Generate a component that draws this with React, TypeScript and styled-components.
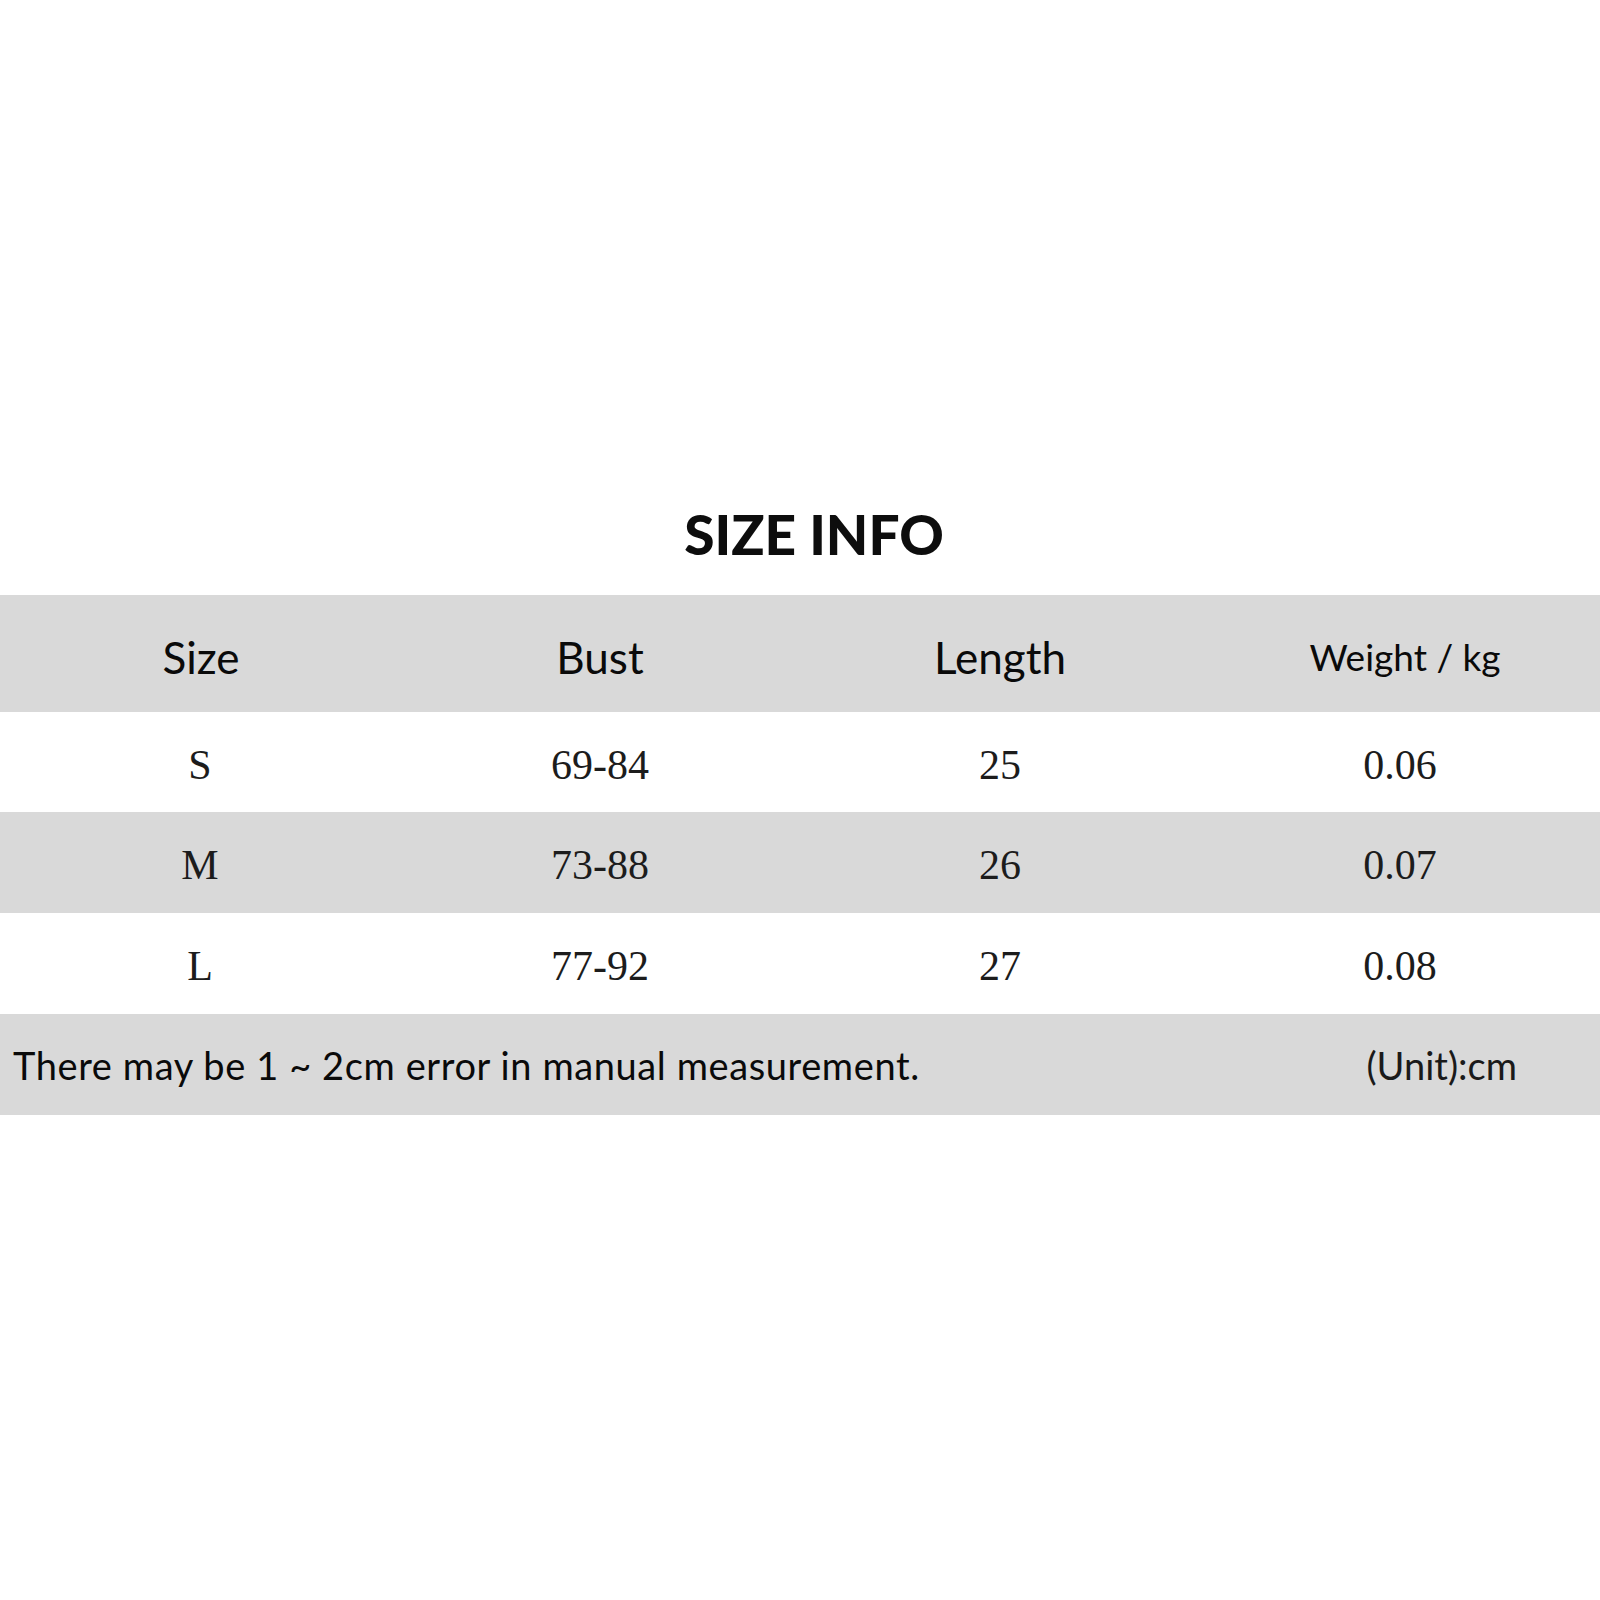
import React from "react";
import styled, { createGlobalStyle } from "styled-components";

const Global = createGlobalStyle`
  html, body { margin: 0; padding: 0; background: #ffffff; }
  body { font-family: Lato, "Liberation Sans", sans-serif; }
`;

const Page = styled.div`
  width: 1600px;
  height: 1600px;
  padding-top: 507px;
  box-sizing: border-box;
  background: #fff;
`;

const Title = styled.h1`
  margin: 0 0 33px 28px;
  text-align: center;
  font-family: Lato, "Liberation Sans", sans-serif;
  font-weight: 900;
  font-size: 55px;
  line-height: 55px;
  color: #0d0d0d;
`;

const Row = styled.div<{ $shade: boolean; $h: number }>`
  display: grid;
  grid-template-columns: repeat(4, 400px);
  height: ${(p) => p.$h}px;
  background: ${(p) => (p.$shade ? "#d9d9d9" : "#ffffff")};
  align-items: center;
`;

const HeadCell = styled.div<{ $size: number; $dx: number }>`
  text-align: center;
  font-family: Lato, "Liberation Sans", sans-serif;
  font-size: ${(p) => p.$size}px;
  line-height: 1;
  color: #0a0a0a;
  padding-top: 6px;
  padding-left: ${(p) => p.$dx}px;
`;

const Cell = styled.div`
  text-align: center;
  padding-top: 5px;
`;

const Num = styled.span`
  display: inline-block;
  font-family: "Liberation Serif", "Times New Roman", serif;
  font-size: 42px;
  line-height: 1;
  color: #1c1c1c;
`;

const Footer = styled.div`
  display: flex;
  justify-content: space-between;
  align-items: center;
  height: 101px;
  background: #d9d9d9;
  padding: 0 83px 0 13px;
  font-family: Lato, "Liberation Sans", sans-serif;
  font-size: 38px;
  line-height: 1;
  color: #0a0a0a;
`;

const Note = styled.span`
  letter-spacing: 0.6px;
`;

const Unit = styled.span`
  color: #1a1a1a;
`;

const heads = [
  { t: "Size", s: 44, dx: 2 },
  { t: "Bust", s: 44, dx: 0 },
  { t: "Length", s: 44, dx: 0 },
  { t: "Weight / kg", s: 37, dx: 10 },
];

const rows = [
  ["S", "69-84", "25", "0.06"],
  ["M", "73-88", "26", "0.07"],
  ["L", "77-92", "27", "0.08"],
];

export default function App() {
  return (
    <>
      <Global />
      <Page>
        <Title>SIZE INFO</Title>
        <Row $shade $h={117}>
          {heads.map((h) => (
            <HeadCell key={h.t} $size={h.s} $dx={h.dx}>
              {h.t}
            </HeadCell>
          ))}
        </Row>
        {rows.map((r, i) => (
          <Row key={r[0]} $shade={i % 2 === 1} $h={i === 0 ? 100 : 101}>
            {r.map((c, j) => (
              <Cell key={j}>
                <Num>{c}</Num>
              </Cell>
            ))}
          </Row>
        ))}
        <Footer>
          <Note>There may be 1 ~ 2cm error in manual measurement.</Note>
          <Unit>(Unit):cm</Unit>
        </Footer>
      </Page>
    </>
  );
}
